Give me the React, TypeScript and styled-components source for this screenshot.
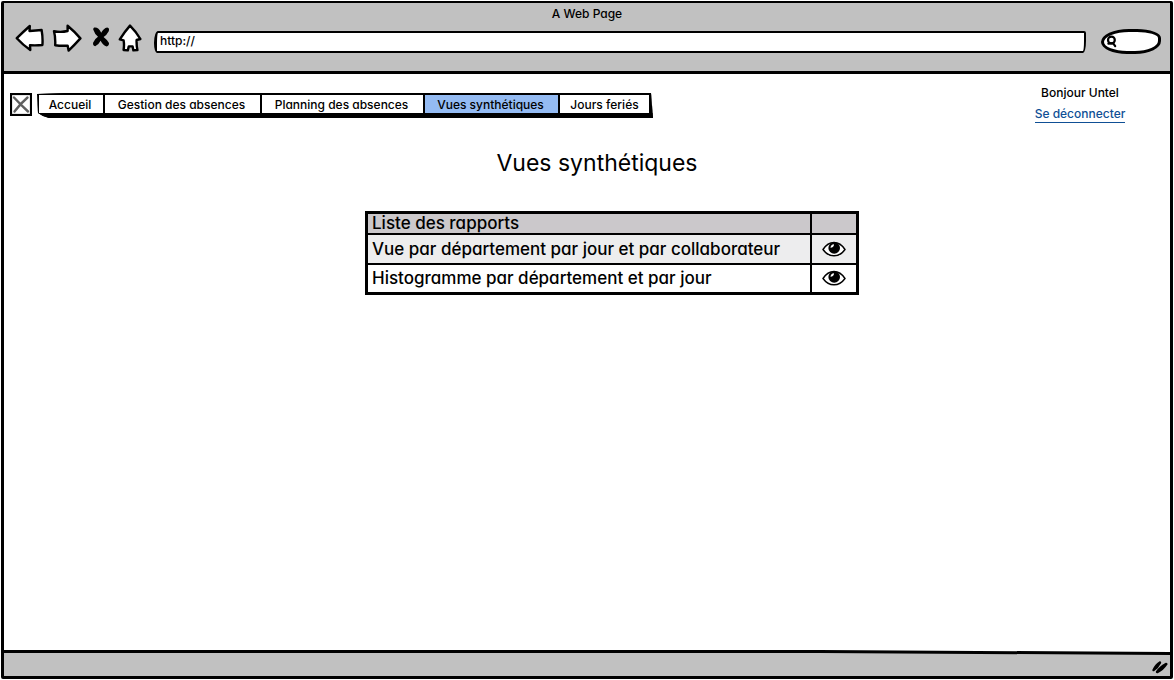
import React from "react";
import styled, { createGlobalStyle } from "styled-components";

const GlobalStyle = createGlobalStyle`
  *, *::before, *::after { box-sizing: border-box; }
  body {
    margin: 0;
    background: #fff;
    color: #000;
    font-family: Inter, Lato, "Liberation Sans", sans-serif;
    font-feature-settings: "cv11";
    font-size: 12px;
    font-weight: 500;
    line-height: 20px;
  }
`;

const BrowserWindow = styled.div`
  display: flex;
  flex-direction: column;
  min-height: 100vh;
  padding: 1px;
`;

const Frame = styled.div`
  flex: 1;
  display: flex;
  flex-direction: column;
  border: 3px solid #000;
  border-top-width: 2px;
  border-radius: 2px;
  background: #000;
`;

const Chrome = styled.header`
  background: #c1c1c1;
  border-bottom: 3px solid #000;
  padding-bottom: 18px;
`;

const WindowTitle = styled.div`
  text-align: center;
  line-height: 16px;
  padding-top: 3px;
`;

const Toolbar = styled.form`
  display: flex;
  align-items: center;
  height: 31px;
  padding: 0 9px 0 11px;
`;

const ToolButton = styled.button<{ $gap: number }>`
  display: flex;
  padding: 0;
  margin-right: ${(p) => p.$gap}px;
  border: 0;
  background: none;
  cursor: pointer;
`;

const AddressInput = styled.input`
  flex: 1;
  min-width: 0;
  height: 22px;
  margin-top: 8px;
  padding: 0 3px 3px;
  border: 2px solid #000;
  border-left-width: 3px;
  border-radius: 4px 2px 3px 3px / 12px 2px 12px 10px;
  background: #fff;
  color: #000;
  font: inherit;
  outline: 0;
`;

const SearchBox = styled.label`
  display: flex;
  align-items: center;
  width: 60px;
  height: 25px;
  margin: 8px 0 0 15px;
  padding-left: 2px;
  border: 3px solid #000;
  border-radius: 28px 24px 26px 26px / 13px 9px 13px 12px;
  background: #fff;
`;

const SearchInput = styled.input`
  width: 36px;
  padding: 0;
  border: 0;
  outline: 0;
  background: none;
  font: inherit;
`;

/* The lower edge drops slightly towards the right, like a line drawn by hand. */
const Page = styled.div`
  flex: 1;
  background: #fff;
  clip-path: polygon(0 0, 100% 0, 100% 100%, 70% calc(100% - 2px), 0 calc(100% - 2px));
`;

const TopBar = styled.div`
  display: flex;
  align-items: flex-start;
  padding: 9px 42px 0 6px;
`;

const LogoBox = styled.div`
  display: flex;
  margin: 10px 5px 0 0;
`;

const Menu = styled.nav`
  display: grid;
  grid-template-columns: 66px 157px 163px 135px 95px;
  margin-top: 10px;
  border-top: 2px solid #000;
  border-bottom: 5px solid #000;
  background: #000;
  clip-path: polygon(0 1px, 30px 0, 614px 0, 616px 100%, 12px 100%, 6px 23px, 1px 20px);
`;

const MenuLink = styled.a<{ $active?: boolean }>`
  height: 18px;
  padding-right: 2px;
  line-height: 20px;
  text-align: center;
  white-space: nowrap;
  color: #000;
  text-decoration: none;
  background: ${(p) => (p.$active ? "#94bbf3" : "#fff")};
  border-left: 2px solid #000;

  &:last-child {
    padding-right: 0;
    border-right: 4px solid #000;
  }
`;

const UserBox = styled.div`
  margin-left: auto;
  width: 96px;
  text-align: center;
  white-space: nowrap;
`;

const LogoutLink = styled.a`
  display: inline-block;
  line-height: 16px;
  margin-top: 3px;
  color: #0f4f95;
  text-decoration: none;
  border-bottom: 1px solid #0f4f95;
`;

const Main = styled.main`
  padding-left: 20px;
`;

const Heading = styled.h1`
  margin: 25px 0 34px;
  font-size: 23px;
  font-weight: 400;
  line-height: 28px;
  text-align: center;
`;

const ReportArea = styled.div`
  padding-left: 30px;
`;

const ReportTable = styled.table`
  width: 494px;
  margin: 0 auto;
  table-layout: fixed;
  border-collapse: collapse;
  border: 3px solid #000;
  font-size: 17px;
`;

const HeadRow = styled.tr`
  height: 21px;
  background: #cbc8cb;
`;

const BodyRow = styled.tr<{ $shaded?: boolean }>`
  height: 30px;
  background: ${(p) => (p.$shaded ? "#ededee" : "#fff")};
`;

const HeadCell = styled.th<{ $width?: number }>`
  width: ${(p) => (p.$width ? `${p.$width}px` : "auto")};
  padding: 0 4px;
  border: 2px solid #000;
  font-weight: 500;
  line-height: 17px;
  text-align: left;
  white-space: nowrap;
`;

const Cell = styled.td`
  padding: 0 4px;
  border: 2px solid #000;
  white-space: nowrap;
`;

const ViewButton = styled.button`
  display: flex;
  margin: 0 auto;
  padding: 0;
  border: 0;
  background: none;
  cursor: pointer;
`;

const Footer = styled.footer`
  display: flex;
  justify-content: flex-end;
  align-items: flex-end;
  height: 24px;
  padding: 0 1px 2px 0;
  background: #c1c1c1;
  clip-path: polygon(0 1px, 70% 1px, 100% 3px, 100% 100%, 0 100%);
`;

const outline = {
  fill: "#fff",
  stroke: "#000",
  strokeWidth: 2.4,
  strokeLinejoin: "round" as const,
};

const BackIcon = () => (
  <svg width="29" height="28" viewBox="0 0 29 28">
    <path {...outline} d="M1.8 14.2 Q8 8 14.8 2 L14.5 7 Q21 6.6 26.6 6 Q28 14 27.4 21 Q21 21.6 15 21.2 L15.3 26 Q8 21 1.8 14.2Z" />
  </svg>
);

const ForwardIcon = () => (
  <svg width="30" height="28" viewBox="0 0 30 28">
    <path {...outline} d="M2 7.2 Q9 8.6 15.6 7 L15.6 1.8 Q22.5 7.5 28.4 14.4 Q22.5 21 16.6 26.6 L15.6 21.6 Q9 22 3.2 21.2 Q3.6 13 2 7.2Z" />
  </svg>
);

const StopIcon = () => (
  <svg width="18" height="24" viewBox="0 0 18 24">
    <path d="M2.2 1.6 Q6.6 1 9.2 6.8 Q11.6 2 15.2 1.4 Q18 2 16.6 5.6 Q14.6 9.4 11.6 11 Q15 13.6 17 17 Q17.2 20 14.6 20.4 Q11 19.4 8.6 14.8 Q6.6 19 3.2 20.2 Q.4 19.6 1.2 16.6 Q3 12.6 6 10.8 Q2.6 8 1.2 3.6 Q1.2 2 2.2 1.6Z" />
  </svg>
);

const HomeIcon = () => (
  <svg width="24" height="28" viewBox="0 0 24 28">
    <path {...outline} d="M12 1.6 Q18 7.6 22.4 15 L18.6 16 Q18.4 21 19.4 26 L15.4 26.4 L14.6 22.4 L10.8 22.4 L9.8 26.4 L5.6 26 Q6.4 21 5.6 16.4 L1.8 15.4 Q6.4 8 12 1.6Z" />
  </svg>
);

const SearchIcon = () => (
  <svg width="12" height="13" viewBox="0 0 12 13" fill="none" stroke="#000" strokeWidth="2.2" strokeLinecap="round">
    <circle cx="5.4" cy="5" r="3.4" />
    <path d="M2.4 8.6 L7 8.2 L9.2 11.2" />
  </svg>
);

const LogoPlaceholder = () => (
  <svg width="22" height="23" viewBox="0 0 22 23" role="img" aria-label="Logo">
    <rect x="1" y="1" width="20" height="21" fill="#fff" stroke="#000" strokeWidth="2.2" />
    <path d="M4 4.5 Q11 12 18 18.5 M17.5 4.5 Q10 11 4.5 18.5" fill="none" stroke="#606060" strokeWidth="2.4" strokeLinecap="round" />
  </svg>
);

const EyeIcon = () => (
  <svg width="24" height="16" viewBox="0 0 24 16">
    <path d="M1 8.5 Q5.5 1.5 12 1.5 Q18.5 1.5 23 8.5 Q18.5 14.8 12 14.8 Q5.5 14.8 1 8.5Z" fill="#fff" stroke="#000" strokeWidth="1.4" />
    <circle cx="12.2" cy="7" r="5.8" fill="#000" />
    <path d="M8.4 6.8 Q8.8 3.6 12 3.2 Q12 6.6 8.4 6.8Z" fill="#fff" />
  </svg>
);

const ResizeGrip = () => (
  <svg width="18" height="14" viewBox="0 0 18 14">
    <path d="M1.4 9.8 Q3.6 4.4 8.6 1.2 Q10.6 1 10.2 3 Q7.6 8.4 3 11.2 Q1 11.8 1.4 9.8Z" />
    <path d="M4.8 11.6 Q8.6 5.8 14.8 2.8 Q17 2.6 16.4 4.6 Q12.6 10.6 6.8 13.2 Q4.4 13.6 4.8 11.6Z" />
  </svg>
);

const menuItems = [
  "Accueil",
  "Gestion des absences",
  "Planning des absences",
  "Vues synthétiques",
  "Jours feriés",
];

const reports = [
  "Vue par département par jour et par collaborateur",
  "Histogramme par département et par jour",
];

export default function App() {
  return (
    <BrowserWindow>
      <GlobalStyle />
      <Frame>
        <Chrome>
          <WindowTitle>A Web Page</WindowTitle>
          <Toolbar onSubmit={(e) => e.preventDefault()}>
            <ToolButton type="button" $gap={8} aria-label="Back"><BackIcon /></ToolButton>
            <ToolButton type="button" $gap={10} aria-label="Forward"><ForwardIcon /></ToolButton>
            <ToolButton type="button" $gap={8} aria-label="Stop"><StopIcon /></ToolButton>
            <ToolButton type="button" $gap={12} aria-label="Home"><HomeIcon /></ToolButton>
            <AddressInput aria-label="Address" defaultValue="http://" />
            <SearchBox>
              <SearchIcon />
              <SearchInput aria-label="Search" />
            </SearchBox>
          </Toolbar>
        </Chrome>
        <Page>
          <TopBar>
            <LogoBox><LogoPlaceholder /></LogoBox>
            <Menu>
              {menuItems.map((item) => (
                <MenuLink key={item} href="#" $active={item === "Vues synthétiques"}>{item}</MenuLink>
              ))}
            </Menu>
            <UserBox>
              <div>Bonjour Untel</div>
              <LogoutLink href="#">Se déconnecter</LogoutLink>
            </UserBox>
          </TopBar>
          <Main>
            <Heading>Vues synthétiques</Heading>
            <ReportArea>
              <ReportTable>
                <thead>
                  <HeadRow>
                    <HeadCell>Liste des rapports</HeadCell>
                    <HeadCell $width={47} aria-label="Afficher" />
                  </HeadRow>
                </thead>
                <tbody>
                  {reports.map((report, i) => (
                    <BodyRow key={report} $shaded={i === 0}>
                      <Cell>{report}</Cell>
                      <Cell>
                        <ViewButton type="button" aria-label={`Afficher ${report}`}><EyeIcon /></ViewButton>
                      </Cell>
                    </BodyRow>
                  ))}
                </tbody>
              </ReportTable>
            </ReportArea>
          </Main>
        </Page>
        <Footer><ResizeGrip /></Footer>
      </Frame>
    </BrowserWindow>
  );
}
